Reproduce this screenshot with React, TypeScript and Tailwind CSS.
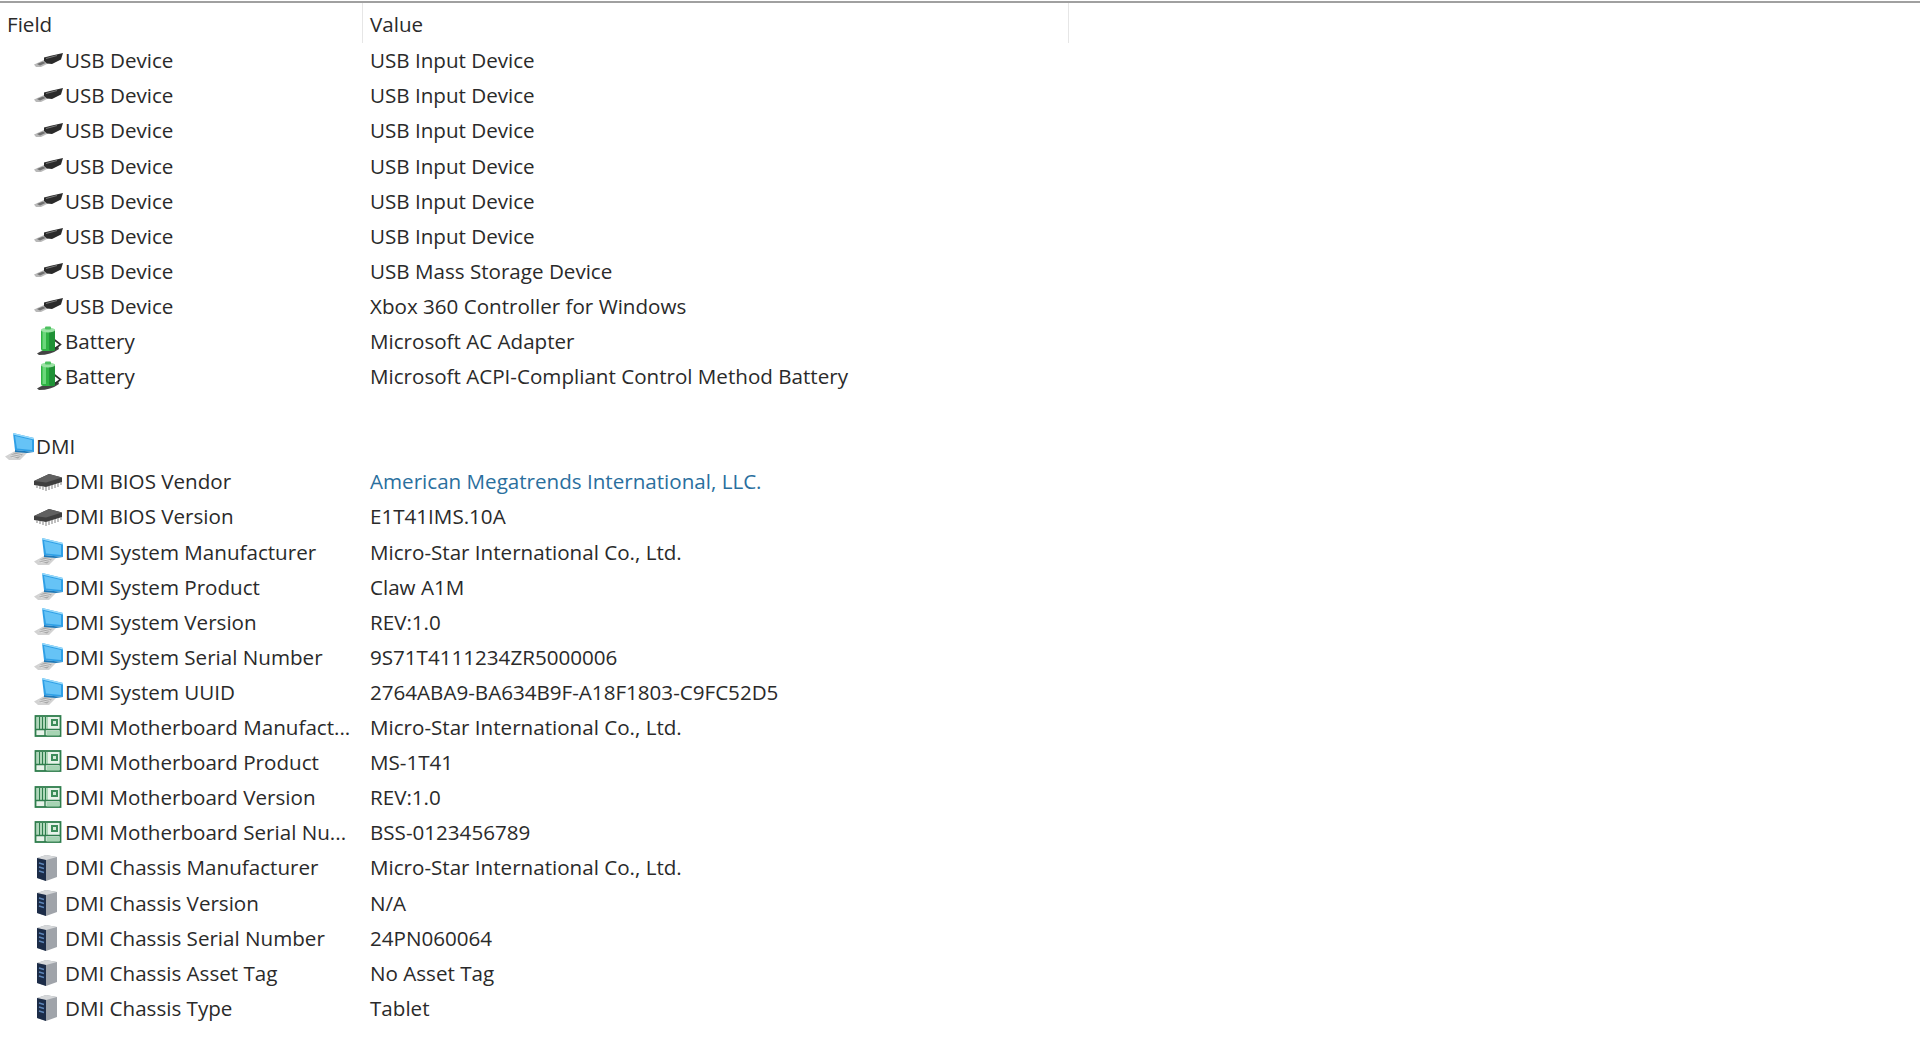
const FONT = "font-['Open_Sans','Noto_Sans',sans-serif]"

type IconName = 'usb' | 'battery' | 'laptop' | 'chip' | 'board' | 'chassis' | 'none'

function UsbIcon() {
  return (
    <svg width="29" height="28" viewBox="0 0 29 28">
      <path d="M0 17.5 L10 13 L15 16 L7 20 L2 20 Z" fill="#b9b9b9" />
      <path d="M3 17 L9 14.5 L11.5 16 L6 18.5 Z" fill="#6f6f6f" />
      <path d="M10 10.5 L18 8.5 L29 6 L27 12.5 L18 17 L13 16.5 L10 14 Z" fill="#2b2b2b" />
      <path d="M12 11.5 L23 8.5" stroke="#777" strokeWidth="1.2" />
    </svg>
  )
}

function BatteryIcon() {
  return (
    <svg width="28" height="30" viewBox="0 0 28 30">
      <path d="M3 27.5 Q10 23 17 23 L24 20 L25 23 Q17 29 5 29 Z" fill="#444" />
      <path d="M20 13.5 L26.5 18.5 L20 23.5" fill="none" stroke="#2f2f2f" strokeWidth="1.6" />
      <rect x="7" y="3" width="14" height="22" rx="2.5" fill="#2fb344" />
      <rect x="15" y="3" width="6" height="22" rx="2" fill="#1f9136" />
      <rect x="8.5" y="5" width="3.5" height="18" fill="#6bd77b" />
      <ellipse cx="14" cy="4" rx="7" ry="2.6" fill="#9be3a5" />
      <rect x="11" y="0.5" width="6" height="3" rx="1" fill="#4cc05f" />
    </svg>
  )
}

function LaptopIcon() {
  return (
    <svg width="30" height="30" viewBox="0 0 30 30">
      <path d="M0 24.5 L10 19 L23 20 L15 28 L4 28 Z" fill="#d2d2d2" />
      <path d="M4 24 L10.5 20.5 L19 21 L13 26.5 Z" fill="#a8a8a8" />
      <path d="M4 24 L19 21 M7 25.5 L16 23.5" stroke="#e6e6e6" strokeWidth="0.8" />
      <path d="M8 1 L29 6 L29 20 L10 18 Z" fill="#2e9fe6" />
      <path d="M10 4 L27 8 L27 18 L12 16.5 Z" fill="#66c3f6" />
      <path d="M8 1 L29 6 L29 7.5 L8 2.5 Z" fill="#9adbfb" />
      <path d="M10 18 L29 20 L22 21 L10 20 Z" fill="#1c78b8" />
    </svg>
  )
}

function ChipIcon() {
  return (
    <svg width="28" height="28" viewBox="0 0 28 28">
      <path d="M0 13 L15 6 L28 9.5 L28 14 L12 19 L0 17 Z" fill="#3f3f3f" />
      <path d="M0 13 L15 6 L28 9.5 L12 14.5 Z" fill="#606060" />
      <g stroke="#8c8c8c" strokeWidth="1.1">
        <path d="M3 17 V20 M6 18 V21 M9 18.5 V22 M12 19 V23 M15 18 V22 M18 17 V21 M21 16 V20 M24 15 V19 M27 14 V17" />
      </g>
    </svg>
  )
}

function BoardIcon() {
  return (
    <svg width="28" height="26" viewBox="0 0 28 26">
      <rect x="1.5" y="2" width="25" height="20" fill="#e8f3ea" stroke="#2e7d4c" strokeWidth="1.8" />
      <path d="M3 3 H14 V15 H3 Z" fill="#aed7b9" />
      <path d="M5.5 3 V15 M8.5 3 V15 M11.5 3 V15" stroke="#2e7d4c" strokeWidth="1" />
      <rect x="17" y="5" width="7" height="7" fill="#3d8c5a" />
      <rect x="19" y="7" width="3" height="3" fill="#d5ecd9" />
      <path d="M2 15.5 H26 M11 16 V22" stroke="#2e7d4c" strokeWidth="1.4" />
      <rect x="12.5" y="17" width="13" height="4.5" fill="#a6d4b3" />
    </svg>
  )
}

function ChassisIcon() {
  return (
    <svg width="28" height="28" viewBox="0 0 28 28">
      <path d="M3 4 L12 1 L23 3 L23 23 L12 27 L3 24 Z" fill="#a0a4aa" />
      <path d="M3 4 L12 1 L23 3 L12 6 Z" fill="#d6d8da" />
      <path d="M3 4 L12 6 L12 27 L3 24 Z" fill="#1c2c48" />
      <path d="M5 9 L10 10.5 M5 13 L10 14.5 M5 17 L10 18.5" stroke="#5f86b8" strokeWidth="1.5" />
    </svg>
  )
}

function RowIcon({ name }: { name: IconName }) {
  if (name === 'usb') return <UsbIcon />
  if (name === 'battery') return <BatteryIcon />
  if (name === 'laptop') return <LaptopIcon />
  if (name === 'chip') return <ChipIcon />
  if (name === 'board') return <BoardIcon />
  if (name === 'chassis') return <ChassisIcon />
  return null
}

const ROWS: { icon: IconName; field: string; value: string; link?: boolean }[] = [
  { icon: 'usb', field: 'USB Device', value: 'USB Input Device' },
  { icon: 'usb', field: 'USB Device', value: 'USB Input Device' },
  { icon: 'usb', field: 'USB Device', value: 'USB Input Device' },
  { icon: 'usb', field: 'USB Device', value: 'USB Input Device' },
  { icon: 'usb', field: 'USB Device', value: 'USB Input Device' },
  { icon: 'usb', field: 'USB Device', value: 'USB Input Device' },
  { icon: 'usb', field: 'USB Device', value: 'USB Mass Storage Device' },
  { icon: 'usb', field: 'USB Device', value: 'Xbox 360 Controller for Windows' },
  { icon: 'battery', field: 'Battery', value: 'Microsoft AC Adapter' },
  { icon: 'battery', field: 'Battery', value: 'Microsoft ACPI-Compliant Control Method Battery' },
]

const DMI_ROWS: { icon: IconName; field: string; value: string; link?: boolean }[] = [
  { icon: 'chip', field: 'DMI BIOS Vendor', value: 'American Megatrends International, LLC.', link: true },
  { icon: 'chip', field: 'DMI BIOS Version', value: 'E1T41IMS.10A' },
  { icon: 'laptop', field: 'DMI System Manufacturer', value: 'Micro-Star International Co., Ltd.' },
  { icon: 'laptop', field: 'DMI System Product', value: 'Claw A1M' },
  { icon: 'laptop', field: 'DMI System Version', value: 'REV:1.0' },
  { icon: 'laptop', field: 'DMI System Serial Number', value: '9S71T4111234ZR5000006' },
  { icon: 'laptop', field: 'DMI System UUID', value: '2764ABA9-BA634B9F-A18F1803-C9FC52D5' },
  { icon: 'board', field: 'DMI Motherboard Manufact...', value: 'Micro-Star International Co., Ltd.' },
  { icon: 'board', field: 'DMI Motherboard Product', value: 'MS-1T41' },
  { icon: 'board', field: 'DMI Motherboard Version', value: 'REV:1.0' },
  { icon: 'board', field: 'DMI Motherboard Serial Nu...', value: 'BSS-0123456789' },
  { icon: 'chassis', field: 'DMI Chassis Manufacturer', value: 'Micro-Star International Co., Ltd.' },
  { icon: 'chassis', field: 'DMI Chassis Version', value: 'N/A' },
  { icon: 'chassis', field: 'DMI Chassis Serial Number', value: '24PN060064' },
  { icon: 'chassis', field: 'DMI Chassis Asset Tag', value: 'No Asset Tag' },
  { icon: 'chassis', field: 'DMI Chassis Type', value: 'Tablet' },
]

function Row({ icon, field, value, link }: { icon: IconName; field: string; value: string; link?: boolean }) {
  return (
    <div className="flex h-[35.1px] items-center">
      <div className="flex w-[370px] shrink-0 items-center pl-[34px]">
        <div className="flex w-[31px] shrink-0 items-center justify-start">
          <RowIcon name={icon} />
        </div>
        <span className="whitespace-nowrap">{field}</span>
      </div>
      <span className={link ? 'whitespace-nowrap text-[#2a6f9e]' : 'whitespace-nowrap'}>{value}</span>
    </div>
  )
}

export default function App() {
  return (
    <div className={`${FONT} h-[1044px] w-[1920px] overflow-hidden bg-white pt-[1px] text-[20.6px] leading-none text-[#2a2a2a]`}>
      <div className="h-[2px] bg-[#a0a0a0]" />
      <div className="flex h-[40px] items-center">
        <div className="flex h-full w-[363px] shrink-0 items-center border-r border-[#e6e6e6] pt-[3px] pl-[7px]">Field</div>
        <div className="flex h-full w-[706px] shrink-0 items-center border-r border-[#e6e6e6] pt-[3px] pl-[7px]">Value</div>
      </div>
      {ROWS.map((r, i) => (
        <Row key={i} {...r} />
      ))}
      <div className="h-[35.1px]" />
      <div className="flex h-[35.1px] items-center pl-[5px]">
        <div className="w-[31px] shrink-0">
          <LaptopIcon />
        </div>
        <span>DMI</span>
      </div>
      {DMI_ROWS.map((r, i) => (
        <Row key={i} {...r} />
      ))}
    </div>
  )
}
